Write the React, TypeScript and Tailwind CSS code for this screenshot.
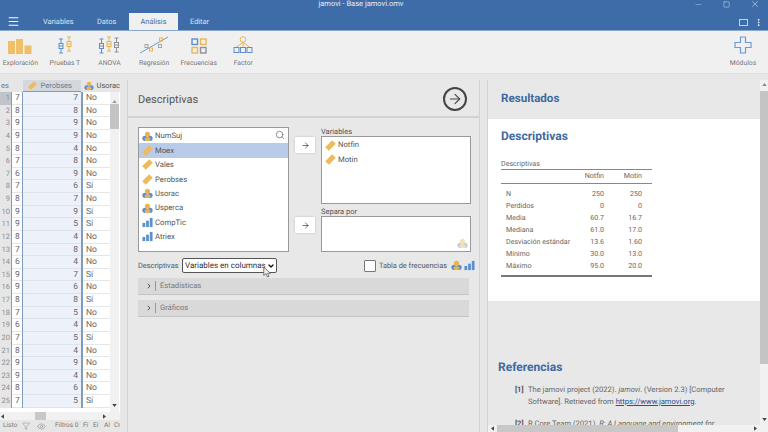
import { ChevronRight, ArrowRight, Search, Menu, Minus, Square, X, MoreVertical, Filter, Eye, ChevronDown } from "lucide-react";

const font = { fontFamily: 'Roboto, "Open Sans", sans-serif' };

const NominalIcon = ({ className = "w-[11px] h-[11px]" }: { className?: string }) => (
  <svg viewBox="0 0 12 12" className={className}>
    <circle cx="3.2" cy="8" r="2.8" fill="#5b8fd0" />
    <circle cx="8.8" cy="8" r="2.8" fill="#5b8fd0" />
    <circle cx="6" cy="3.6" r="2.8" fill="#eab34e" />
    <rect x="3" y="7" width="6" height="3.8" rx="1.5" fill="#eab34e" />
  </svg>
);

const RulerIcon = ({ className = "w-[11px] h-[11px]" }: { className?: string }) => (
  <svg viewBox="0 0 12 12" className={className}>
    <path d="M0.2 7.8 L7.8 0.2 L11.8 4.2 L4.2 11.8 Z" fill="#ebbb5e" />
  </svg>
);

const BarsIcon = ({ className = "w-[11px] h-[11px]" }: { className?: string }) => (
  <svg viewBox="0 0 12 12" className={className}>
    <rect x="0.5" y="6.5" width="3" height="4.5" fill="#5b8fd0" />
    <rect x="4.5" y="4" width="3" height="7" fill="#5b8fd0" />
    <rect x="8.5" y="1" width="3" height="10" fill="#5b8fd0" />
  </svg>
);

const Tri = ({ dir, className = "" }: { dir: "up" | "down" | "left" | "right"; className?: string }) => {
  const d = { up: "M0 4L3 0L6 4Z", down: "M0 0H6L3 4Z", left: "M4 0V6L0 3Z", right: "M0 0V6L4 3Z" }[dir];
  const wide = dir === "up" || dir === "down";
  return (
    <svg viewBox={wide ? "0 0 6 4" : "0 0 4 6"} className={`${wide ? "w-[5px] h-[3px]" : "w-[3px] h-[5px]"} ${className}`}>
      <path d={d} fill="currentColor" />
    </svg>
  );
};

const Box = ({ x, c, up = 0 }: { x: number; c: string; up?: number }) => (
  <g stroke={c} strokeWidth="1" fill="none">
    <path d={`M${x - 2} ${1 + up}H${x + 2}M${x - 2} ${15 + up}H${x + 2}M${x} ${1 + up}V${5.5 + up}M${x} ${10.5 + up}V${15 + up}`} />
    <rect x={x - 2} y={5.5 + up} width="4" height="5" />
    <path d={`M${x - 2} ${8 + up}H${x + 2}`} />
  </g>
);

const tools = [
  {
    label: "Exploración",
    icon: (
      <svg viewBox="0 0 24 15" className="w-6 h-[15px]">
        <rect x="0" y="2" width="7" height="13" fill="#efc069" />
        <rect x="8" y="0" width="7" height="15" fill="#efc069" />
        <rect x="16.5" y="6.5" width="7" height="8.5" fill="#efc069" />
      </svg>
    ),
  },
  {
    label: "Pruebas T",
    icon: (
      <svg viewBox="0 0 16 18" className="w-4 h-[18px]">
        <Box x={4} c="#5b8fd0" up={2} />
        <Box x={12} c="#e9b553" />
      </svg>
    ),
  },
  {
    label: "ANOVA",
    icon: (
      <svg viewBox="0 0 22 18" className="w-[22px] h-[18px]">
        <Box x={3.5} c="#5b8fd0" up={2} />
        <Box x={11} c="#e9b553" />
        <Box x={18.5} c="#8d9299" up={1} />
      </svg>
    ),
  },
  {
    label: "Regresión",
    icon: (
      <svg viewBox="0 0 30 18" className="w-[30px] h-[18px]">
        <path d="M1 17 L29 1" stroke="#6b9ad4" strokeWidth="1" />
        <rect x="10.5" y="12" width="3" height="3" fill="none" stroke="#e9b553" />
        <rect x="19.5" y="8.5" width="3" height="3" fill="none" stroke="#a5a5a5" />
        <rect x="6" y="8.5" width="3" height="3" fill="none" stroke="#a5a5a5" />
        <rect x="20.5" y="2" width="3" height="3" fill="none" stroke="#e9b553" />
      </svg>
    ),
  },
  {
    label: "Frecuencias",
    icon: (
      <svg viewBox="0 0 16 16" className="w-4 h-4" fill="none" strokeWidth="1.4">
        <rect x="1" y="1" width="5.5" height="5.5" stroke="#5b8fd0" />
        <rect x="9.5" y="1" width="5.5" height="5.5" stroke="#e9b553" />
        <rect x="1" y="9.5" width="5.5" height="5.5" stroke="#e9b553" />
        <rect x="9.5" y="9.5" width="5.5" height="5.5" stroke="#8d9299" />
      </svg>
    ),
  },
  {
    label: "Factor",
    icon: (
      <svg viewBox="0 0 20 18" className="w-5 h-[18px]" fill="none" strokeWidth="1">
        <circle cx="10" cy="3.5" r="2.8" stroke="#e9b553" />
        <path d="M10 6.5L3.5 11M10 6.5V11M10 6.5L16.5 11" stroke="#e9b553" />
        <rect x="1" y="11.5" width="5" height="5" stroke="#5b8fd0" />
        <rect x="7.5" y="11.5" width="5" height="5" stroke="#5b8fd0" />
        <rect x="14" y="11.5" width="5" height="5" stroke="#5b8fd0" />
      </svg>
    ),
  },
];

const col1 = [7, 8, 9, 9, 8, 7, 6, 7, 8, 9, 9, 8, 7, 6, 9, 9, 8, 7, 6, 7, 8, 9, 9, 8, 7];
const col2 = [7, 8, 9, 9, 4, 8, 9, 6, 7, 9, 5, 4, 8, 4, 7, 6, 8, 5, 4, 5, 4, 9, 4, 6, 5];
const col3 = ["No", "No", "No", "No", "No", "No", "No", "Sí", "No", "Sí", "Sí", "No", "No", "No", "Sí", "No", "Sí", "No", "No", "Sí", "No", "No", "No", "No", "Sí"];

const sourceVars = [
  { name: "NumSuj", icon: <NominalIcon /> },
  { name: "Moex", icon: <RulerIcon />, selected: true },
  { name: "Vales", icon: <RulerIcon /> },
  { name: "Perobses", icon: <RulerIcon /> },
  { name: "Usorac", icon: <NominalIcon /> },
  { name: "Usperca", icon: <NominalIcon /> },
  { name: "CompTic", icon: <BarsIcon /> },
  { name: "Atriex", icon: <BarsIcon /> },
];

const stats = [
  ["N", "250", "250"],
  ["Perdidos", "0", "0"],
  ["Media", "60.7", "16.7"],
  ["Mediana", "61.0", "17.0"],
  ["Desviación estándar", "13.6", "1.60"],
  ["Mínimo", "30.0", "13.0"],
  ["Máximo", "95.0", "20.0"],
];

const Spreadsheet = () => (
  <div className="w-[120px] shrink-0 flex flex-col bg-white text-[8.5px] text-[#666] overflow-hidden">
    <div className="flex h-[12px] shrink-0 bg-[#e6e6e6] items-center text-[#6b7a90] text-[7.5px] whitespace-nowrap">
      <div className="w-[23px] pl-[1px]">es</div>
      <div className="w-[59px] h-full bg-[#d4d8de] flex items-center gap-[4px] pl-[5px] border-b border-[#7e9dbe]">
        <RulerIcon className="w-[9px] h-[9px]" />
        <span>Perobses</span>
      </div>
      <div className="flex-1 flex items-center gap-[3px] pl-[3px] text-[#555]">
        <NominalIcon className="w-[10px] h-[10px] shrink-0" />
        <span>Usorac</span>
      </div>
    </div>
    <div className="flex-1 flex min-h-0">
      <div className="w-[110px] overflow-hidden">
        {col1.map((v, i) => (
          <div key={i} className="flex h-[12.63px] leading-[12px]">
            <div className={`w-[11px] shrink-0 text-right pr-[1px] ${i === 0 ? "bg-[#bfc4ca]" : "bg-[#e6e6e6]"} text-[#8a8f96] text-[7.5px]`}>{i + 1}</div>
            <div className="w-[12px] shrink-0 border-x border-[#7e9dbe] pl-[3px] shadow-[inset_0_-1px_0_#e6e6e6]">{v}</div>
            <div className="w-[58px] shrink-0 bg-[#edf1fa] border-b border-[#dfe3ea] text-right pr-[3px]">{col2[i]}</div>
            <div className="flex-1 border-l-2 border-[#7e9dbe] pl-[3px] shadow-[inset_0_-1px_0_#e6e6e6]">{col3[i]}</div>
          </div>
        ))}
      </div>
      <div className="w-[9px] bg-[#f1f1f1] flex flex-col items-center">
        <div className="h-[11px] flex items-end text-[#999]"><Tri dir="up" /></div>
        <div className="w-full h-[25px] mt-px bg-[#c4c4c4]" />
        <div className="flex-1" />
        <div className="h-[8px] text-[#444]"><Tri dir="down" /></div>
      </div>
    </div>
    <div className="h-[8px] shrink-0 bg-[#f1f1f1] flex items-center text-[#444]">
      <Tri dir="left" className="ml-[1px]" />
      <div className="ml-[31px] w-[11px] h-full bg-[#c8c8c8]" />
      <Tri dir="right" className="ml-[57px]" />
    </div>
    <div className="h-[12px] shrink-0 bg-[#e6e6e6] flex items-center text-[6.5px] text-[#777] pl-[3px] whitespace-nowrap">
      <span className="w-[19px] shrink-0">Listo</span>
      <Filter className="w-[8px] h-[8px] shrink-0" strokeWidth={1.2} />
      <Eye className="w-[9px] h-[9px] ml-[7px] shrink-0" strokeWidth={1.2} />
      <span className="ml-[9px] w-[22px] shrink-0">Filtros 0</span>
      <span className="ml-[6px] w-[4px] shrink-0">Fi</span>
      <span className="ml-[6px] w-[4px] shrink-0">Ei</span>
      <span className="ml-[7px] w-[4px] shrink-0">Al</span>
      <span className="ml-[6px] w-[5px] shrink-0">Cr</span>
    </div>
  </div>
);

const VarRow = ({ name, icon, selected }: { name: string; icon: React.ReactNode; selected?: boolean }) => (
  <div className={`h-[14.4px] flex items-center gap-[2px] pl-[3px] ${selected ? "bg-[#b8cbe9]" : ""}`}>
    {icon}
    <span className="text-[7.7px] text-[#555]">{name}</span>
  </div>
);

const MoveButton = () => (
  <div className="w-5 h-[16px] bg-white shadow-[0_0_2px_#bbb] flex items-center justify-center">
    <ArrowRight className="w-[9px] h-[9px] text-[#444]" strokeWidth={2} />
  </div>
);

const Section = ({ title }: { title: string }) => (
  <div className="h-[17px] bg-[#d9d9d9] border-b border-[#c4c4c4] flex items-center pl-[7px] text-[7.6px] text-[#777]">
    <ChevronRight className="w-[8px] h-[8px] text-[#555]" strokeWidth={3} />
    <span className="ml-[2px] pl-[4px] border-l border-[#999] leading-[10px]">{title}</span>
  </div>
);

const AnalysisPanel = () => (
  <div className="w-[353px] shrink-0 bg-[#e8e8e8] border-x border-[#d2d2d2] flex flex-col">
    <div className="h-[38px] shrink-0 pt-[2px] border-b-2 border-[#d2d2d2] flex items-center justify-between pl-[10px] pr-[12px]">
      <span className="text-[11px] text-[#555] mt-[2px]">Descriptivas</span>
      <div className="w-[24px] h-[24px] rounded-full border-2 border-[#444] flex items-center justify-center">
        <ArrowRight className="w-[16px] h-[16px] text-[#444]" strokeWidth={1.6} />
      </div>
    </div>
    <div className="flex pl-[10px] pt-[9px] gap-[6px]">
      <div className="w-[151px] h-[125px] bg-white border border-[#999] relative pt-[1px]">
        <Search className="absolute right-[3px] top-[2px] w-[10px] h-[10px] text-[#555]" strokeWidth={1.5} />
        {sourceVars.map((v) => (
          <VarRow key={v.name} name={v.name} icon={v.icon} selected={v.selected} />
        ))}
      </div>
      <div className="w-5 pt-[10px] flex flex-col gap-[64px]">
        <MoveButton />
        <MoveButton />
      </div>
      <div className="w-[150px] flex flex-col">
        <div className="text-[7.5px] text-[#555] leading-[9px] h-[9px]">Variables</div>
        <div className="h-[68px] bg-white border border-[#999] pt-[1px]">
          <VarRow name="Notfin" icon={<RulerIcon />} />
          <VarRow name="Motin" icon={<RulerIcon />} />
        </div>
        <div className="text-[7.5px] text-[#555] leading-[9px] h-[9px] mt-[3px]">Separa por</div>
        <div className="h-[36px] bg-white border border-[#999] flex items-end justify-end p-[2px]">
          <NominalIcon className="w-[11px] h-[11px] opacity-40" />
        </div>
      </div>
    </div>
    <div className="flex items-center mt-[6px] pl-[10px] pr-[4px] h-[15px]">
      <span className="w-[44px] shrink-0 text-[7.4px] text-[#555]">Descriptivas</span>
      <div className="relative w-[95px] h-[15px] bg-white border border-[#555] rounded-[2px] flex items-center pl-[2px] text-[8px] text-[#333] whitespace-nowrap">
        Variables en columnas
        <ChevronDown className="absolute right-[1px] w-[8px] h-[8px] text-[#111]" strokeWidth={4} />
        <svg viewBox="0 0 12 16" className="absolute left-[80px] top-[7px] w-[9px] h-[13px]">
          <path d="M1 1V12L4 9.5L6 14L8 13L6 9H10Z" fill="#eee" stroke="#555" strokeWidth="1" />
        </svg>
      </div>
      <div className="flex-1" />
      <div className="w-[12px] h-[12px] bg-white border border-[#777] rounded-[1px] mr-[3px]" />
      <span className="text-[7.4px] text-[#555] mr-[4px]">Tabla de frecuencias</span>
      <NominalIcon className="w-[11px] h-[11px] mr-[2px]" />
      <BarsIcon className="w-[11px] h-[11px]" />
    </div>
    <div className="flex flex-col gap-[5px] mx-[10px] mt-[5px]">
      <Section title="Estadísticas" />
      <Section title="Gráficos" />
    </div>
  </div>
);

const ResultsPanel = () => (
  <div className="flex-1 flex bg-[#e8e8e8] border-l border-[#d2d2d2] min-w-0">
    <div className="flex-1 flex flex-col min-w-0 overflow-hidden relative">
      <div className="h-[39px] flex items-center pl-[13px] pb-[2px] shrink-0">
        <span className="text-[11.6px] font-bold text-[#3e6aa0]">Resultados</span>
      </div>
      <div className="bg-white h-[182px] pl-[13px] pr-[4px] shrink-0">
        <div className="text-[12px] font-bold text-[#3e6aa0] pt-[8px] leading-[18px]">Descriptivas</div>
        <div className="w-[151px] mt-[14px] text-[7.1px] text-[#666]">
          <div className="h-[11px] leading-[10px] border-b border-[#888]">Descriptivas</div>
          <div className="flex h-[14px] items-center border-b border-[#888]">
            <span className="flex-1" />
            <span className="w-[26px] text-right">Notfin</span>
            <span className="w-[48px] text-right pr-[10px]">Motin</span>
          </div>
          <div className="pt-[4px] pb-[3px] border-b-2 border-[#777]">
            {stats.map((r) => (
              <div key={r[0]} className="flex h-[12px] items-center">
                <span className="flex-1 pl-[5px]">{r[0]}</span>
                <span className="w-[26px] text-right">{r[1]}</span>
                <span className="w-[48px] text-right pr-[10px]">{r[2]}</span>
              </div>
            ))}
          </div>
        </div>
      </div>
      <div className="flex-1 pl-[10px] pt-[58px] text-[7.6px] text-[#666] overflow-hidden">
        <div className="text-[12px] font-bold text-[#3e6aa0] leading-[16px]">Referencias</div>
        <div className="flex mt-[9px] pl-[17px] leading-[11.5px] whitespace-nowrap">
          <b className="w-[13px] shrink-0 text-[#555]">[1]</b>
          <div>
            The jamovi project (2022). <i>jamovi</i>. (Version 2.3) [Computer
            <br />
            Software]. Retrieved from <span className="text-[#27509b] underline">https://www.jamovi.org</span>.
          </div>
        </div>
        <div className="flex mt-[11px] pl-[17px] leading-[11.5px] whitespace-nowrap">
          <b className="w-[13px] shrink-0 text-[#555]">[2]</b>
          <div>
            R Core Team (2021). <i>R: A Language and environment for</i>
          </div>
        </div>
      </div>
      <div className="absolute left-0 right-0 bottom-0 h-[7px] bg-[#f1f1f1] flex items-center text-[#444]">
        <Tri dir="left" className="ml-[3px]" />
        <div className="ml-[3px] w-[181px] h-full bg-[#c8c8c8]" />
        <div className="flex-1" />
        <Tri dir="right" className="mr-[3px]" />
      </div>
    </div>
    <div className="w-[8px] bg-[#f1f1f1] flex flex-col items-center shrink-0">
      <div className="h-[8px] flex items-center text-[#888]"><Tri dir="up" /></div>
      <div className="w-full h-[273px] mt-[3px] bg-[#c4c4c4]" />
      <div className="flex-1" />
      <div className="h-[14px] text-[#444]"><Tri dir="down" /></div>
    </div>
  </div>
);

export default function App() {
  return (
    <div className="w-[768px] h-[432px] overflow-hidden flex flex-col bg-[#e6e6e6] [text-rendering:geometricPrecision]" style={font}>
      {/* Title bar + tabs */}
      <div className="h-[31px] shrink-0 bg-[#3e6ca8] border-b border-[#8aa7cc] flex flex-col text-white">
        <div className="h-[13px] relative flex items-start justify-center pr-[46px] text-[7.5px] leading-[8px] text-[#e8eef6]">
          <span>jamovi - Base jamovi.omv</span>
          <div className="absolute right-[8px] top-[-1px] flex items-center gap-[20px]">
            <Minus className="w-[9px] h-[9px]" strokeWidth={1} />
            <Square className="w-[7px] h-[7px]" strokeWidth={1.5} />
            <X className="w-[10px] h-[10px]" strokeWidth={1.2} />
          </div>
        </div>
        <div className="h-[17px] flex items-end text-[7.4px] relative">
          <Menu className="w-[13px] h-[13px] ml-[7px] mb-[2px]" strokeWidth={2} />
          <div className="flex items-center ml-[23px] w-[31px] h-[17px] text-[#dce6f2]">Variables</div>
          <div className="flex items-center ml-[23px] w-[21px] h-[17px] text-[#dce6f2]">Datos</div>
          <div className="flex items-center justify-center ml-[11px] w-[49px] h-[17px] bg-[#f0f0f0] text-[#4a6e9e]">Análisis</div>
          <div className="flex items-center ml-[12px] h-[17px] text-[#dce6f2]">Editar</div>
          <div className="absolute right-[5px] bottom-[3px] flex items-center gap-[6px]">
            <div className="w-[9px] h-[7px] border border-[#c5d3e6]" />
            <MoreVertical className="w-[9px] h-[9px]" strokeWidth={2.5} />
          </div>
        </div>
      </div>
      {/* Ribbon */}
      <div className="h-[43px] shrink-0 bg-[#f1f0f0] border-b border-[#e0e0e0] flex items-start text-[#777]">
        <div className="flex ml-[-2px] pt-[3px]">
          {tools.map((t) => (
            <div key={t.label} className="w-[44.6px] h-[34px] flex flex-col items-center">
              <div className="h-[20px] flex items-end">{t.icon}</div>
              <span className="whitespace-nowrap leading-[10px] text-[6.8px] mt-[4px]">{t.label}</span>
            </div>
          ))}
        </div>
        <div className="flex-1" />
        <div className="w-[36px] mt-[5px] mr-[7px] flex flex-col items-center">
          <svg viewBox="0 0 18 18" className="w-[18px] h-[18px]">
            <path d="M6.5 1H11.5V6.5H17V11.5H11.5V17H6.5V11.5H1V6.5H6.5Z" fill="none" stroke="#6b9ad4" strokeWidth="1.2" />
          </svg>
          <span className="leading-[10px] text-[6.8px] mt-[4px]">Módulos</span>
        </div>
      </div>
      {/* Main */}
      <div className="flex-1 flex min-h-0 pt-[6px]">
        <Spreadsheet />
        <div className="w-[7px] shrink-0" />
        <AnalysisPanel />
        <div className="w-[7px] shrink-0" />
        <ResultsPanel />
      </div>
    </div>
  );
}
